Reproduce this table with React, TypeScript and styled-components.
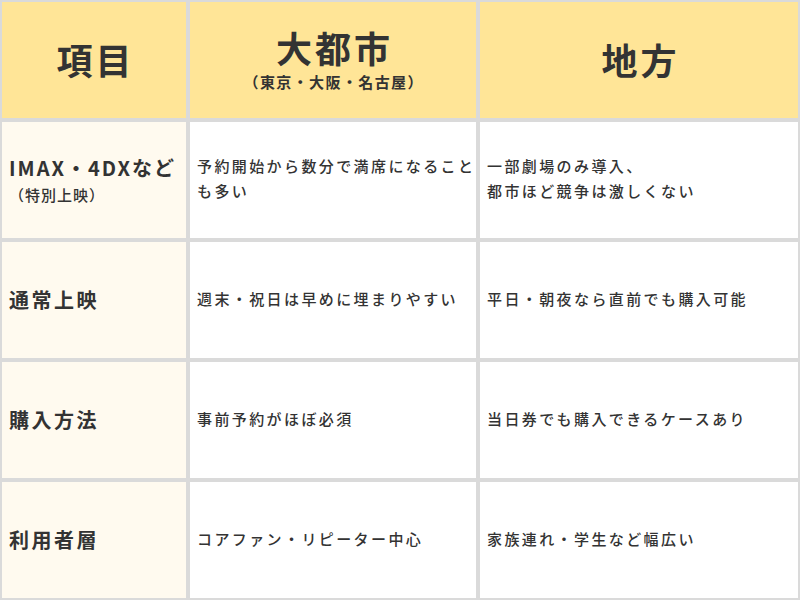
import { createGlobalStyle, styled } from "styled-components";

const GlobalStyle = createGlobalStyle`
    html, body {
        margin: 0;
        padding: 0;
        background: #ffffff;
    }

    body {
        font-family: "Noto Sans CJK JP", "Noto Sans", sans-serif;
        color: #333333;
    }
`;

interface Row
{
    label: string;
    note?: string;
    city: string[];
    local: string[];
}

const rows: Row[] = [
    {
        label: "IMAX・4DXなど",
        note: "（特別上映）",
        city: ["予約開始から数分で満席になること", "も多い"],
        local: ["一部劇場のみ導入、", "都市ほど競争は激しくない"],
    },
    {
        label: "通常上映",
        city: ["週末・祝日は早めに埋まりやすい"],
        local: ["平日・朝夜なら直前でも購入可能"],
    },
    {
        label: "購入方法",
        city: ["事前予約がほぼ必須"],
        local: ["当日券でも購入できるケースあり"],
    },
    {
        label: "利用者層",
        city: ["コアファン・リピーター中心"],
        local: ["家族連れ・学生など幅広い"],
    },
];

export default function App()
{
    return (
        <>
            <GlobalStyle />
            <Table>
                <HeaderCell>
                    <HeaderTitle>項目</HeaderTitle>
                </HeaderCell>
                <HeaderCell>
                    <HeaderTitle>大都市</HeaderTitle>
                    <HeaderNote>（東京・大阪・名古屋）</HeaderNote>
                </HeaderCell>
                <HeaderCell>
                    <HeaderTitle>地方</HeaderTitle>
                </HeaderCell>

                {rows.map((row) => (
                    <Line key={row.label} row={row} />
                ))}
            </Table>
        </>
    );
}

function Line({ row }: { row: Row })
{
    return (
        <>
            <LabelCell>
                <Label $compact={!!row.note}>{row.label}</Label>
                {row.note && <LabelNote>{row.note}</LabelNote>}
            </LabelCell>
            <BodyCell>
                {row.city.map((t) => <BodyText key={t}>{t}</BodyText>)}
            </BodyCell>
            <BodyCell>
                {row.local.map((t) => <BodyText key={t}>{t}</BodyText>)}
            </BodyCell>
        </>
    );
}

const Table = styled.div`
    display: grid;
    grid-template-columns: 184px 286px 318px;
    grid-template-rows: repeat(5, 116px);
    gap: 4px;
    padding: 2px;
    width: 800px;
    height: 600px;
    box-sizing: border-box;
    background: #dadada;
`;

const HeaderCell = styled.div`
    display: flex;
    flex-direction: column;
    align-items: center;
    justify-content: center;
    padding-bottom: 2px;
    background: #ffe597;
`;

const HeaderTitle = styled.div`
    font-size: 36px;
    font-weight: 700;
    line-height: 40px;
    letter-spacing: 3px;
    margin-right: -3px;
`;

const HeaderNote = styled.div`
    font-size: 15px;
    font-weight: 600;
    line-height: 18px;
    letter-spacing: 1.4px;
    margin-top: 6px;
    margin-right: -1.4px;
`;

const LabelCell = styled.div`
    display: flex;
    flex-direction: column;
    justify-content: center;
    padding: 0 0 0 7px;
    background: #fffaef;
`;

const Label = styled.div<{ $compact: boolean }>`
    font-size: 20px;
    font-weight: 700;
    line-height: 26px;
    letter-spacing: ${(p) => (p.$compact ? "2px" : "2.5px")};
    white-space: nowrap;
`;

const LabelNote = styled.div`
    font-size: 15px;
    font-weight: 500;
    line-height: 22px;
    letter-spacing: 1px;
    margin-top: 3px;
`;

const BodyCell = styled.div`
    display: flex;
    flex-direction: column;
    justify-content: center;
    padding: 0 0 4px 7px;
    background: #ffffff;
`;

const BodyText = styled.div`
    font-size: 15px;
    font-weight: 500;
    line-height: 25px;
    letter-spacing: 2.4px;
    white-space: nowrap;
`;
